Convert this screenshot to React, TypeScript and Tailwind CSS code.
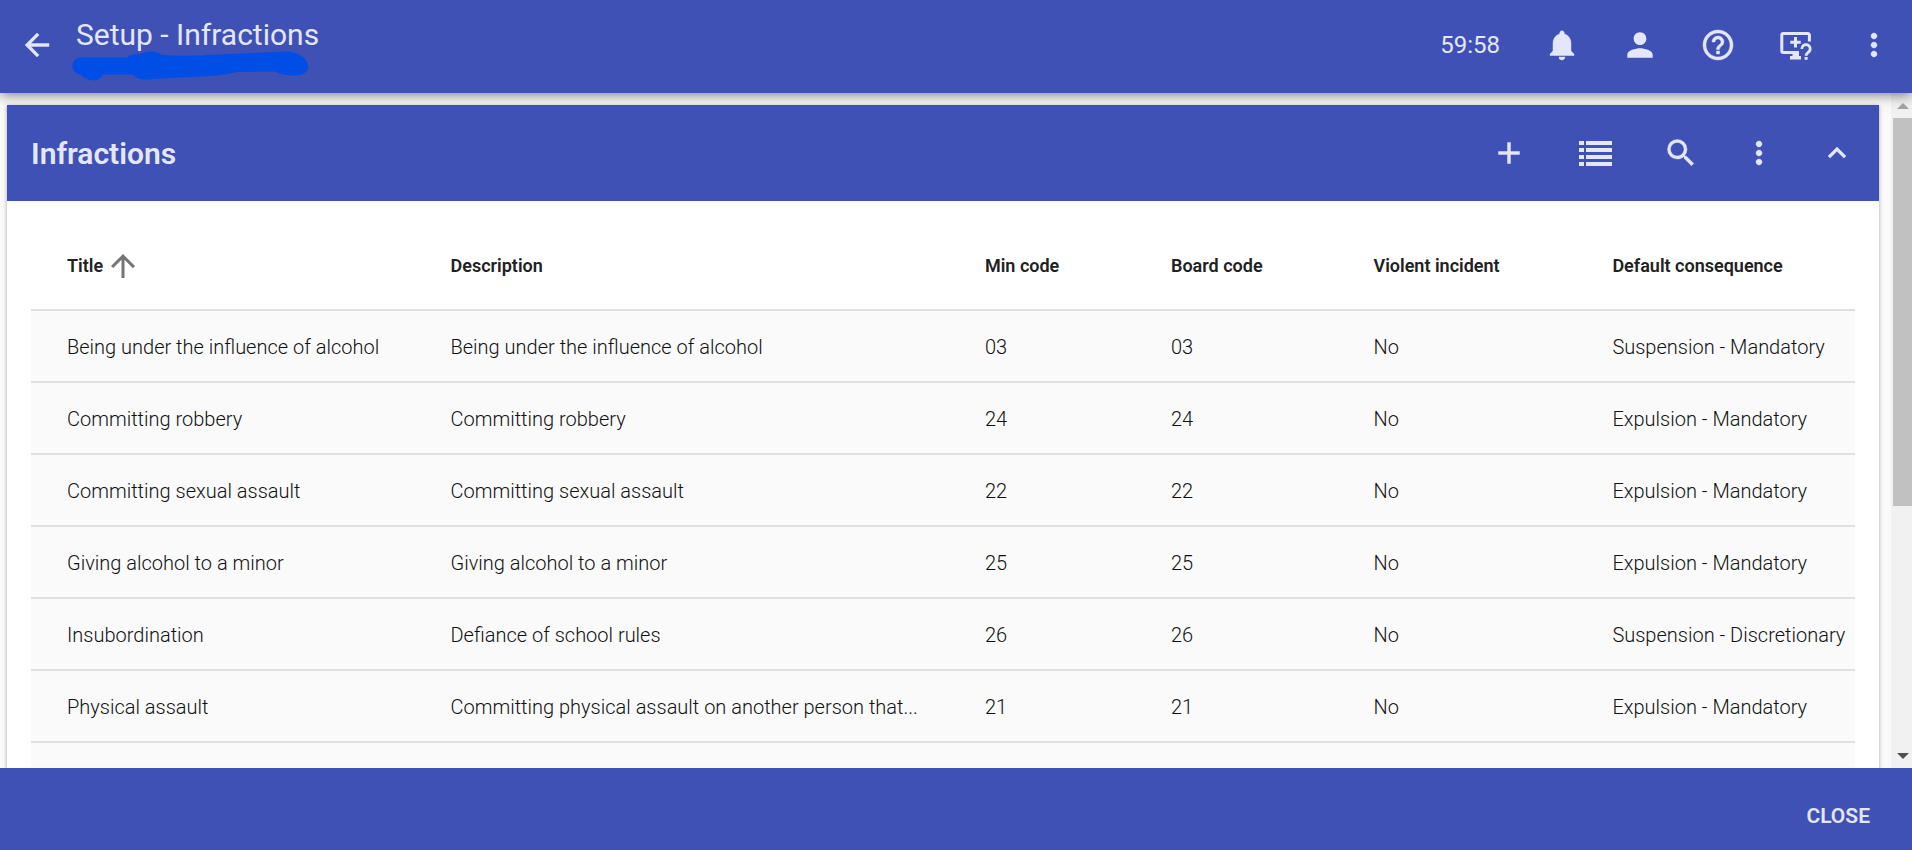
import type { ReactNode } from "react";
import {
  MdAdd,
  MdArrowBack,
  MdArrowUpward,
  MdExpandLess,
  MdHelpOutline,
  MdMoreVert,
  MdNotifications,
  MdPerson,
  MdSearch,
} from "react-icons/md";

type Infraction = {
  title: string;
  description: string;
  minCode: string;
  boardCode: string;
  violent: string;
  consequence: string;
};

const infractions: Infraction[] = [
  { title: "Being under the influence of alcohol", description: "Being under the influence of alcohol", minCode: "03", boardCode: "03", violent: "No", consequence: "Suspension - Mandatory" },
  { title: "Committing robbery", description: "Committing robbery", minCode: "24", boardCode: "24", violent: "No", consequence: "Expulsion - Mandatory" },
  { title: "Committing sexual assault", description: "Committing sexual assault", minCode: "22", boardCode: "22", violent: "No", consequence: "Expulsion - Mandatory" },
  { title: "Giving alcohol to a minor", description: "Giving alcohol to a minor", minCode: "25", boardCode: "25", violent: "No", consequence: "Expulsion - Mandatory" },
  { title: "Insubordination", description: "Defiance of school rules", minCode: "26", boardCode: "26", violent: "No", consequence: "Suspension - Discretionary" },
  { title: "Physical assault", description: "Committing physical assault on another person that...", minCode: "21", boardCode: "21", violent: "No", consequence: "Expulsion - Mandatory" },
];

function IconButton({ label, wide, children }: { label: string; wide?: boolean; children: ReactNode }) {
  return (
    <button
      type="button"
      aria-label={label}
      className={`flex h-12 shrink-0 items-center justify-center [&_path[fill=none]]:stroke-none ${wide ? "w-16" : "w-12"}`}
    >
      {children}
    </button>
  );
}

function RemoteHelpIcon() {
  return (
    <svg viewBox="0 0 36 36" className="size-9" stroke="currentColor" aria-hidden="true">
      <g style={{ fill: "none" }}>
        <path d="M31.4 14.5V8a1.500 1.500 0 0 0-1.500-1.500H5.300a1.500 1.500 0 0 0-1.500 1.500V24a1.500 1.500 0 0 0 1.500 1.500H21" strokeWidth="3" />
        <path d="M17.500 10v10.500M12.300 15.300h10.400" strokeWidth="3" />
        <path d="M23.800 22a4.200 4.200 0 1 1 7 2.900c-1.500 1.300-2.700 1.700-2.700 3.800" strokeWidth="2.800" />
      </g>
      <path d="M14.500 26h6.500v3h2v3.500H12v-3.500h2.500z" fill="currentColor" stroke="none" />
      <path d="M26.600 30h3v2.800h-3z" fill="currentColor" stroke="none" />
    </svg>
  );
}

function ListIcon() {
  return (
    <svg viewBox="0 0 33 25" className="h-[25px] w-[33px]" fill="currentColor" aria-hidden="true">
      {[0, 7, 14, 21].map((y) => (
        <g key={y}>
          <rect x="0" y={y} width="5" height="4" />
          <rect x="7" y={y} width="26" height="4" />
        </g>
      ))}
    </svg>
  );
}

function Scribble() {
  return (
    <svg viewBox="0 0 238 30" className="-ml-1 h-[30px] w-[238px]" fill="#004ee6" aria-hidden="true">
      <path d="M8 6.500H55C58 3.500 63 2 68 3.500C74 -.5 84-.5 90 4C120 6 150 3 170 2.500L212 .5C222 0 229 4 233 8C240 17 234 24 226 24C216 25 207 23 203 20.500L166 21C150 25 120 26 100 27L74 28.500C68 29 64 27 61 23.500L31 23.500C29 29 22 31 15 28C10 26 10 24 7 23C-2 21-2 8 8 6.500Z" />
    </svg>
  );
}

function ScrollRail() {
  return (
    <div className="flex w-[21px] shrink-0 flex-col bg-[#f1f1f1] pl-[2px]" aria-hidden="true">
      <div className="flex h-[25px] items-center justify-center">
        <svg viewBox="0 0 12 6" className="h-[6px] w-3" fill="#a3a3a3"><path d="M0 6L6 0L12 6Z" /></svg>
      </div>
      <div className="flex-1">
        <div className="h-[62%] bg-[#c1c1c1]" />
      </div>
      <div className="flex h-[25px] items-center justify-center">
        <svg viewBox="0 0 12 6" className="h-[6px] w-3" fill="#505050"><path d="M0 0L6 6L12 0Z" /></svg>
      </div>
    </div>
  );
}

const headCell = "h-[87px] pr-2 font-semibold";
const bodyCell = "h-[72px] truncate border-t-2 border-[#e0e0e0] pt-[2px] pr-2";

export default function App() {
  return (
    <div className="flex h-screen flex-col bg-[#fafafa] font-[Roboto,sans-serif] text-[#212121]">
      <header className="relative z-10 flex h-[93px] shrink-0 items-start bg-[#3f51b5] pt-[21px] pr-[14px] pl-[13px] text-[#e4e7fb] shadow-[0_2px_12px_rgba(0,0,0,0.5)]">
        <IconButton label="Back">
          <MdArrowBack size={36} strokeWidth={0.3} />
        </IconButton>
        <div className="-mt-[2px] ml-[15px] flex-1">
          <h1 className="text-[30px] leading-8">Setup - Infractions</h1>
          <Scribble />
        </div>
        <div className="flex items-center gap-[30px]">
          <span className="mr-2 text-2xl">59:58</span>
          <IconButton label="Notifications"><MdNotifications size={36} strokeWidth={0.3} /></IconButton>
          <IconButton label="Account"><MdPerson size={38} /></IconButton>
          <IconButton label="Help"><MdHelpOutline size={36} strokeWidth={0.3} /></IconButton>
          <IconButton label="Remote help"><RemoteHelpIcon /></IconButton>
          <IconButton label="More options"><MdMoreVert size={36} strokeWidth={0.3} /></IconButton>
        </div>
      </header>

      <div className="flex min-h-0 flex-1">
        <main className="min-w-0 flex-1 overflow-y-auto pt-3 pr-3 pl-[7px] [scrollbar-width:none]">
          <section className="bg-white shadow-[0_1px_4px_rgba(0,0,0,0.35)]">
            <div className="flex h-24 items-center bg-[#3f51b5] pr-[18px] pl-6 text-[#e4e7fb]">
              <h2 className="flex-1 text-[30px] font-semibold">Infractions</h2>
              <div className="flex items-center gap-[30px]">
                <IconButton label="Add infraction"><MdAdd size={36} strokeWidth={0.3} /></IconButton>
                <IconButton label="List view" wide><ListIcon /></IconButton>
                <IconButton label="Search"><MdSearch size={36} strokeWidth={0.3} /></IconButton>
                <IconButton label="More actions"><MdMoreVert size={36} strokeWidth={0.3} /></IconButton>
                <IconButton label="Collapse"><MdExpandLess size={36} strokeWidth={0.3} /></IconButton>
              </div>
            </div>
            <div className="px-6 pt-[22px] pb-6">
              <table className="w-full table-fixed text-left">
                <thead className="text-lg">
                  <tr>
                    <th scope="col" className={`${headCell} w-[23%] pl-9`}>
                      <button type="button" className="flex items-center gap-[2px]">
                        Title
                        <MdArrowUpward size={36} className="text-[#757575]" />
                      </button>
                    </th>
                    <th scope="col" className={`${headCell} w-[29.300%]`}>Description</th>
                    <th scope="col" className={`${headCell} w-[10.200%]`}>Min code</th>
                    <th scope="col" className={`${headCell} w-[11.100%]`}>Board code</th>
                    <th scope="col" className={`${headCell} w-[13.100%]`}>Violent incident</th>
                    <th scope="col" className={headCell}>Default consequence</th>
                  </tr>
                </thead>
                <tbody className="bg-[#fafafa] text-xl font-light text-[#111111]">
                  {infractions.map((row) => (
                    <tr key={row.title}>
                      <td className={`${bodyCell} pl-9`}>{row.title}</td>
                      <td className={bodyCell}>{row.description}</td>
                      <td className={bodyCell}>{row.minCode}</td>
                      <td className={bodyCell}>{row.boardCode}</td>
                      <td className={bodyCell}>{row.violent}</td>
                      <td className={bodyCell}>{row.consequence}</td>
                    </tr>
                  ))}
                  <tr>
                    <td colSpan={6} className={bodyCell} />
                  </tr>
                </tbody>
              </table>
            </div>
          </section>
        </main>
        <ScrollRail />
      </div>

      <footer className="flex h-[82px] shrink-0 items-center justify-end bg-[#3f51b5] px-[18px] pt-4 text-[#e4e7fb]">
        <button type="button" className="h-12 px-6 text-[21px] font-semibold">CLOSE</button>
      </footer>
    </div>
  );
}
